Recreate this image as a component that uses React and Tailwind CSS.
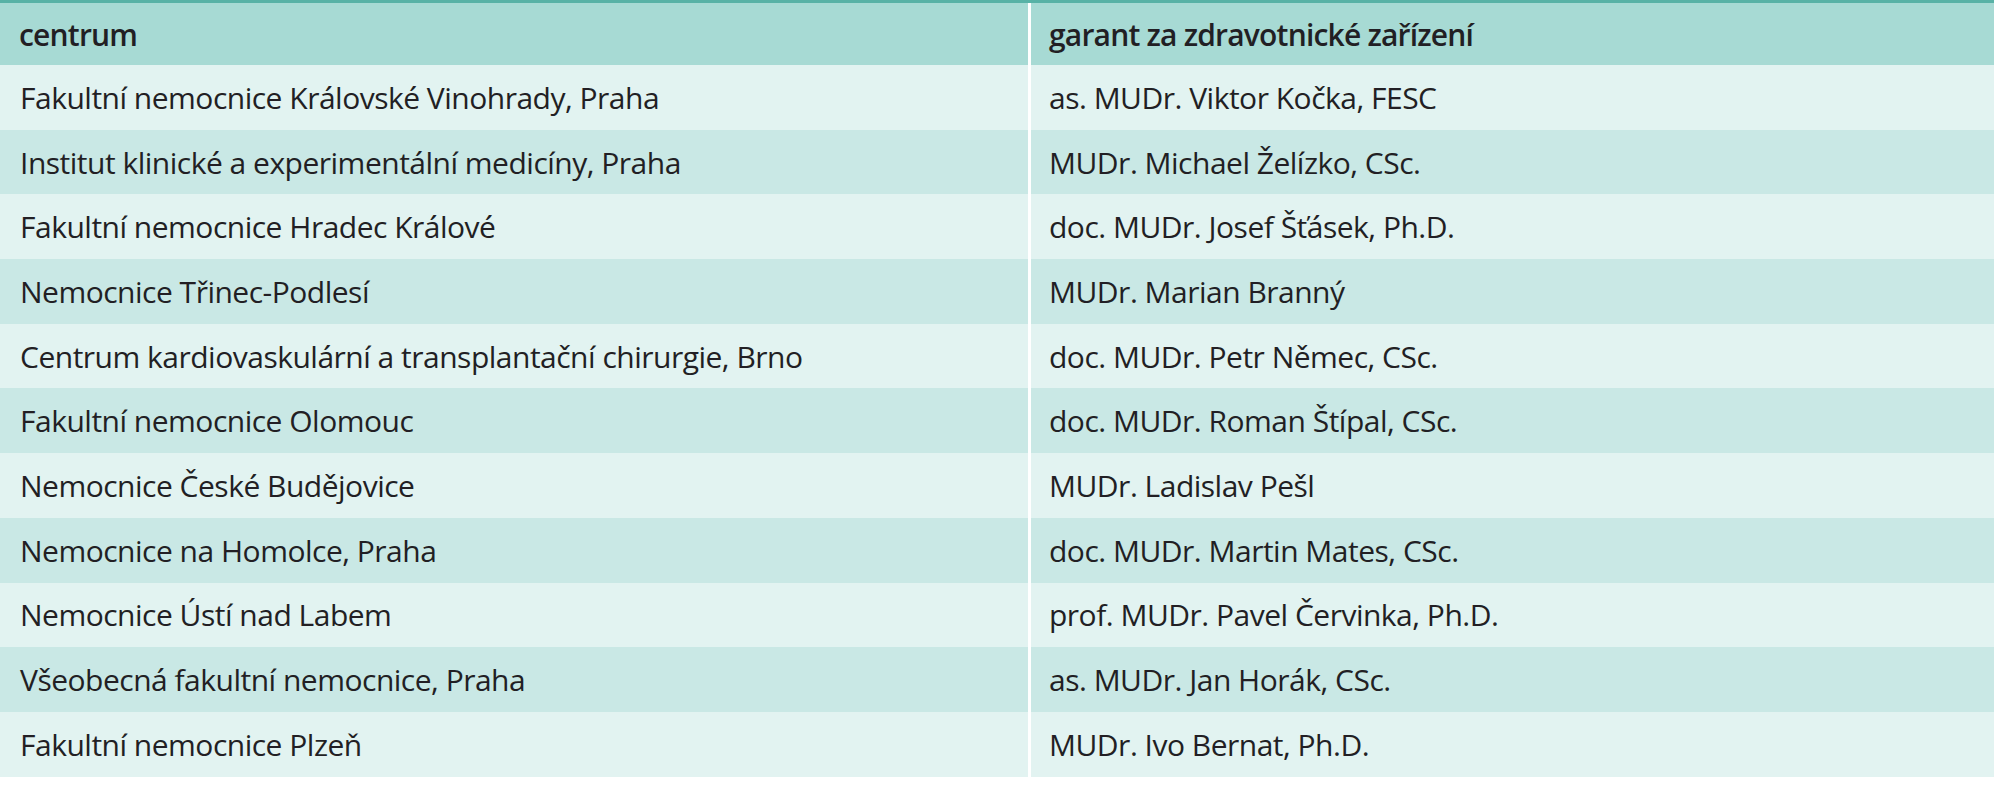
import React from "react";

const rows = [
  ["Fakultní nemocnice Královské Vinohrady, Praha", "as. MUDr. Viktor Kočka, FESC"],
  ["Institut klinické a experimentální medicíny, Praha", "MUDr. Michael Želízko, CSc."],
  ["Fakultní nemocnice Hradec Králové", "doc. MUDr. Josef Šťásek, Ph.D."],
  ["Nemocnice Třinec-Podlesí", "MUDr. Marian Branný"],
  ["Centrum kardiovaskulární a transplantační chirurgie, Brno", "doc. MUDr. Petr Němec, CSc."],
  ["Fakultní nemocnice Olomouc", "doc. MUDr. Roman Štípal, CSc."],
  ["Nemocnice České Budějovice", "MUDr. Ladislav Pešl"],
  ["Nemocnice na Homolce, Praha", "doc. MUDr. Martin Mates, CSc."],
  ["Nemocnice Ústí nad Labem", "prof. MUDr. Pavel Červinka, Ph.D."],
  ["Všeobecná fakultní nemocnice, Praha", "as. MUDr. Jan Horák, CSc."],
  ["Fakultní nemocnice Plzeň", "MUDr. Ivo Bernat, Ph.D."],
];

export default function App() {
  return (
    <div className="w-[1997px] h-[800px] bg-white text-[#221f24] font-['Open_Sans','Roboto',sans-serif] text-[30px] tracking-[-0.5px]">
      <div className="w-[1994px] border-t-[3px] border-[#58b2a6]">
        <div className="flex h-[62px] bg-[#a7dad4] font-semibold tracking-[-0.8px]">
          <div className="w-[1028px] flex items-center pl-[19px]">centrum</div>
          <div className="flex-1 flex items-center border-l-[3px] border-white pl-[18px]">garant za zdravotnické zařízení</div>
        </div>
        {rows.map(([a, b], i) => (
          <div
            key={i}
            className={`flex h-[64.7px] ${i % 2 === 0 ? "bg-[#e2f3f1]" : "bg-[#c9e8e5]"}`}
          >
            <div className="w-[1028px] flex items-center pl-[20px]">{a}</div>
            <div className="flex-1 flex items-center border-l-[3px] border-white pl-[18px]">{b}</div>
          </div>
        ))}
      </div>
    </div>
  );
}
